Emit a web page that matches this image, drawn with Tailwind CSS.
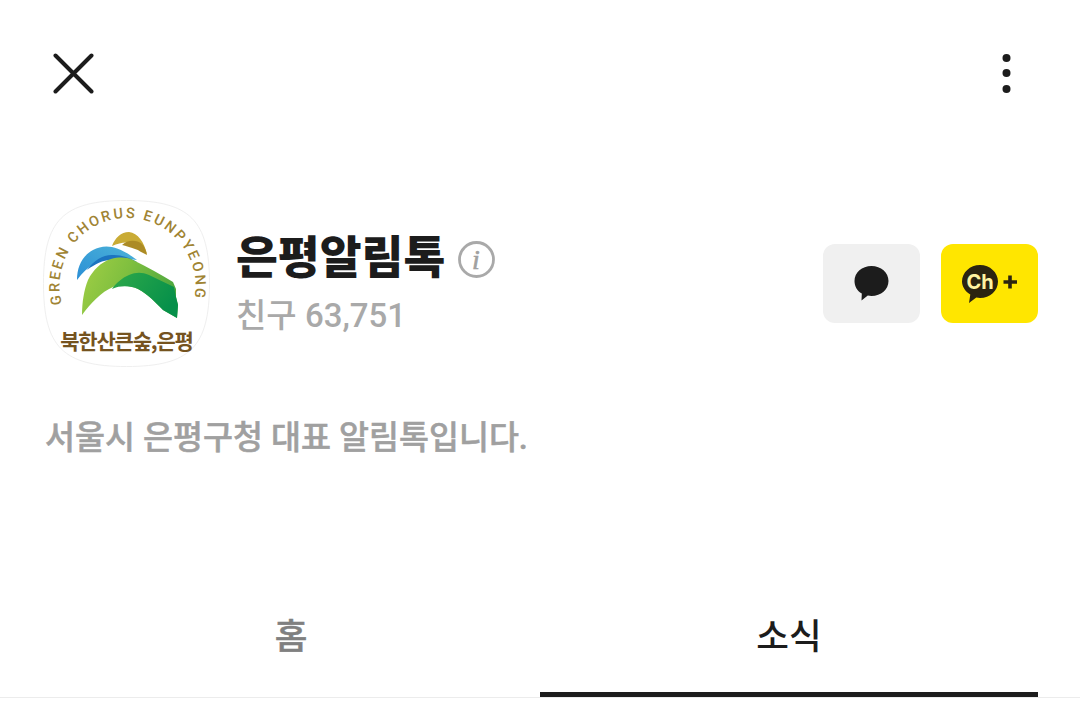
<!DOCTYPE html>
<html lang="ko">
<head>
<meta charset="utf-8">
<script src="https://cdn.jsdelivr.net/npm/@tailwindcss/browser@4"></script>
</head>
<body class="m-0 bg-white">
<div class="w-[1080px] h-[712px] overflow-hidden bg-white flex flex-col font-['Roboto','Noto_Sans_CJK_KR',sans-serif]">
  <header class="h-[146px] pl-[53px] pr-[62px] pt-[53px] flex justify-between items-start shrink-0">
    <svg class="w-[41px] h-[41px]" viewBox="0 0 41 41"><path d="M2.500 2.500L38.500 38.500M38.500 2.500L2.500 38.500" stroke="#1c1c1c" stroke-width="4" stroke-linecap="round" fill="none"/></svg>
    <svg class="w-[24px] h-[41px]" viewBox="0 0 24 41"><circle cx="12.500" cy="5" r="4" fill="#1c1c1c"/><circle cx="12.500" cy="20" r="4" fill="#1c1c1c"/><circle cx="12.500" cy="36" r="4" fill="#1c1c1c"/></svg>
  </header>

  <section class="pl-[43px] pr-[42px] flex items-start shrink-0 mt-[54px]">
    <div class="w-[167px] h-[167px] shrink-0">
      <svg class="w-[167px] h-[167px]" viewBox="0 0 167 167">
        <defs>
          <path id="arc" d="M18.900 104A68 68 0 1 1 140.200 125"/>
          <linearGradient id="gr" x1="0" y1="0" x2="1" y2="0.300"><stop offset="0" stop-color="#a2cf45"/><stop offset="0.500" stop-color="#7fbf3f"/><stop offset="1" stop-color="#4fa83f"/></linearGradient>
          <linearGradient id="dg" x1="0" y1="0" x2="1" y2="0.500"><stop offset="0" stop-color="#2ea94a"/><stop offset="1" stop-color="#06904a"/></linearGradient>
          <linearGradient id="bl" x1="0" y1="1" x2="1" y2="0"><stop offset="0" stop-color="#2b8fd6"/><stop offset="1" stop-color="#4cb3d8"/></linearGradient>
        </defs>
        <path d="M83.500 .5C20 .5 .5 20 .5 83.500S20 166.500 83.500 166.500 166.500 147 166.500 83.500 147 .5 83.500 .5Z" fill="#fff" stroke="#efefef"/>
        <text font-family="Roboto,sans-serif" font-size="14.500" font-weight="500" fill="#a08433" letter-spacing="2.300"><textPath href="#arc" startOffset="0">GREEN CHORUS EUNPYEONG</textPath></text>
        <path d="M69 46C72 38 78 32 86 32 95 33 101 42 104 54L96 48C90 41 80 41 69 46Z" fill="#c9ab35"/>
        <path d="M79 45C84 40 93 39 99 44 102 47 103 51 104 55 99 53 96 50 92 49 87 47 83 46 79 45Z" fill="#ac8b25"/>
        <path d="M34 80C34 67 39 56 50 50 62 44 74 45 94 60L70 57C58 58 45 65 34 80Z" fill="url(#bl)"/>
        <path d="M44 70C51 60 61 54 71 55 79 55 87 58 94 62L68 60C60 60 52 64 44 70Z" fill="#1c74c0"/>
        <path d="M39 115C39 102 41 90 45 80 50 70 58 62 68 59 76 57 83 57 90 60 105 67 118 75 130 82L133 89 133 97 135 105 134 118 120 110C112 102 106 95 95 89 88 86 78 84 70 87 58 92 48 103 39 115Z" fill="url(#gr)"/>
        <path d="M69 89C73 83 79 78 86 75 93 72 99 72 106 75L131 87 133 97 135 105 134 118 120 110C112 102 106 95 95 89 88 86 78 85 69 89Z" fill="url(#dg)"/>
        <text x="83.500" y="149" text-anchor="middle" font-family="'Noto Sans CJK KR',sans-serif" font-size="21" font-weight="700" fill="#75531f" letter-spacing="-1.200">북한산큰숲,은평</text>
      </svg>
    </div>
    <div class="ml-[26px] flex flex-col">
      <div class="flex items-start h-[62px] mt-[23px]">
        <span class="text-[45.500px] leading-[62px] font-black text-[#1c1c1c] font-['Noto_Sans_CJK_KR',sans-serif]">은평알림톡</span>
        <svg class="w-[37px] h-[37px] ml-[13px] mt-[18px]" viewBox="0 0 37 37"><circle cx="18.500" cy="18.500" r="17" fill="none" stroke="#a9a9a9" stroke-width="2.800"/><text x="18" y="28" text-anchor="middle" font-family="'Liberation Serif',serif" font-style="italic" font-size="28" font-weight="500" fill="#a0a0a0" stroke="#a0a0a0" stroke-width=".6">i</text></svg>
      </div>
      <div class="mt-[9px] text-[33px] leading-[44px] font-medium text-[#a9a9a9] whitespace-nowrap">친구 63,751</div>
    </div>
    <div class="ml-auto mt-[44px] flex gap-[21px]">
      <div class="w-[97px] h-[79px] rounded-[12px] bg-[#f0f0f0] flex items-center justify-center">
        <svg class="w-[35px] h-[35px]" viewBox="0 0 35 35"><path d="M17.500 0C27 0 34.500 6.500 34.500 15S27 30 17.500 30C16.200 30 15 29.900 13.800 29.600L7.500 34.500 7.800 27.500C3 25 .5 20 .5 15 .5 6.500 8 0 17.500 0Z" fill="#1c1c1c"/></svg>
      </div>
      <div class="w-[97px] h-[79px] rounded-[12px] bg-[#ffe600] flex items-center justify-center">
        <svg class="w-[56px] h-[38px]" viewBox="0 0 56 38">
          <path d="M18 0C28 0 36 7.500 36 16.500S28 33 18 33C16.800 33 15.500 32.900 14.300 32.600L7 38 8.300 29.500C3.300 26.500 0 21.500 0 16.500 0 7.500 8 0 18 0Z" fill="#2b2410"/>
          <text x="18" y="23.500" text-anchor="middle" font-family="Inter,sans-serif" font-weight="700" font-size="20" fill="#fff3a0">Ch</text>
          <path d="M48 10.500V23.500M41.500 17H55" stroke="#2b2410" stroke-width="3.600" fill="none"/>
        </svg>
      </div>
    </div>
  </section>

  <p class="ml-[45px] mt-[47px] text-[32.600px] leading-[48px] font-medium text-[#a0a0a0] [-webkit-text-stroke:0.5px_#a0a0a0] whitespace-nowrap shrink-0">서울시 은평구청 대표 알림톡입니다.</p>

  <nav class="mt-auto h-[95px] mb-[14px] pl-[42px] flex border-b border-[#ececec] shrink-0">
    <div class="w-[498px] flex justify-center pt-[12px]"><span class="text-[35.500px] leading-[44px] font-medium text-[#808080] [-webkit-text-stroke:0.5px_#808080]">홈</span></div>
    <div class="w-[498px] border-b-[5px] border-[#1c1c1c] flex justify-center pt-[12px]"><span class="text-[35.500px] leading-[44px] font-medium text-[#1c1c1c]">소식</span></div>
  </nav>
</div>
</body>
</html>
